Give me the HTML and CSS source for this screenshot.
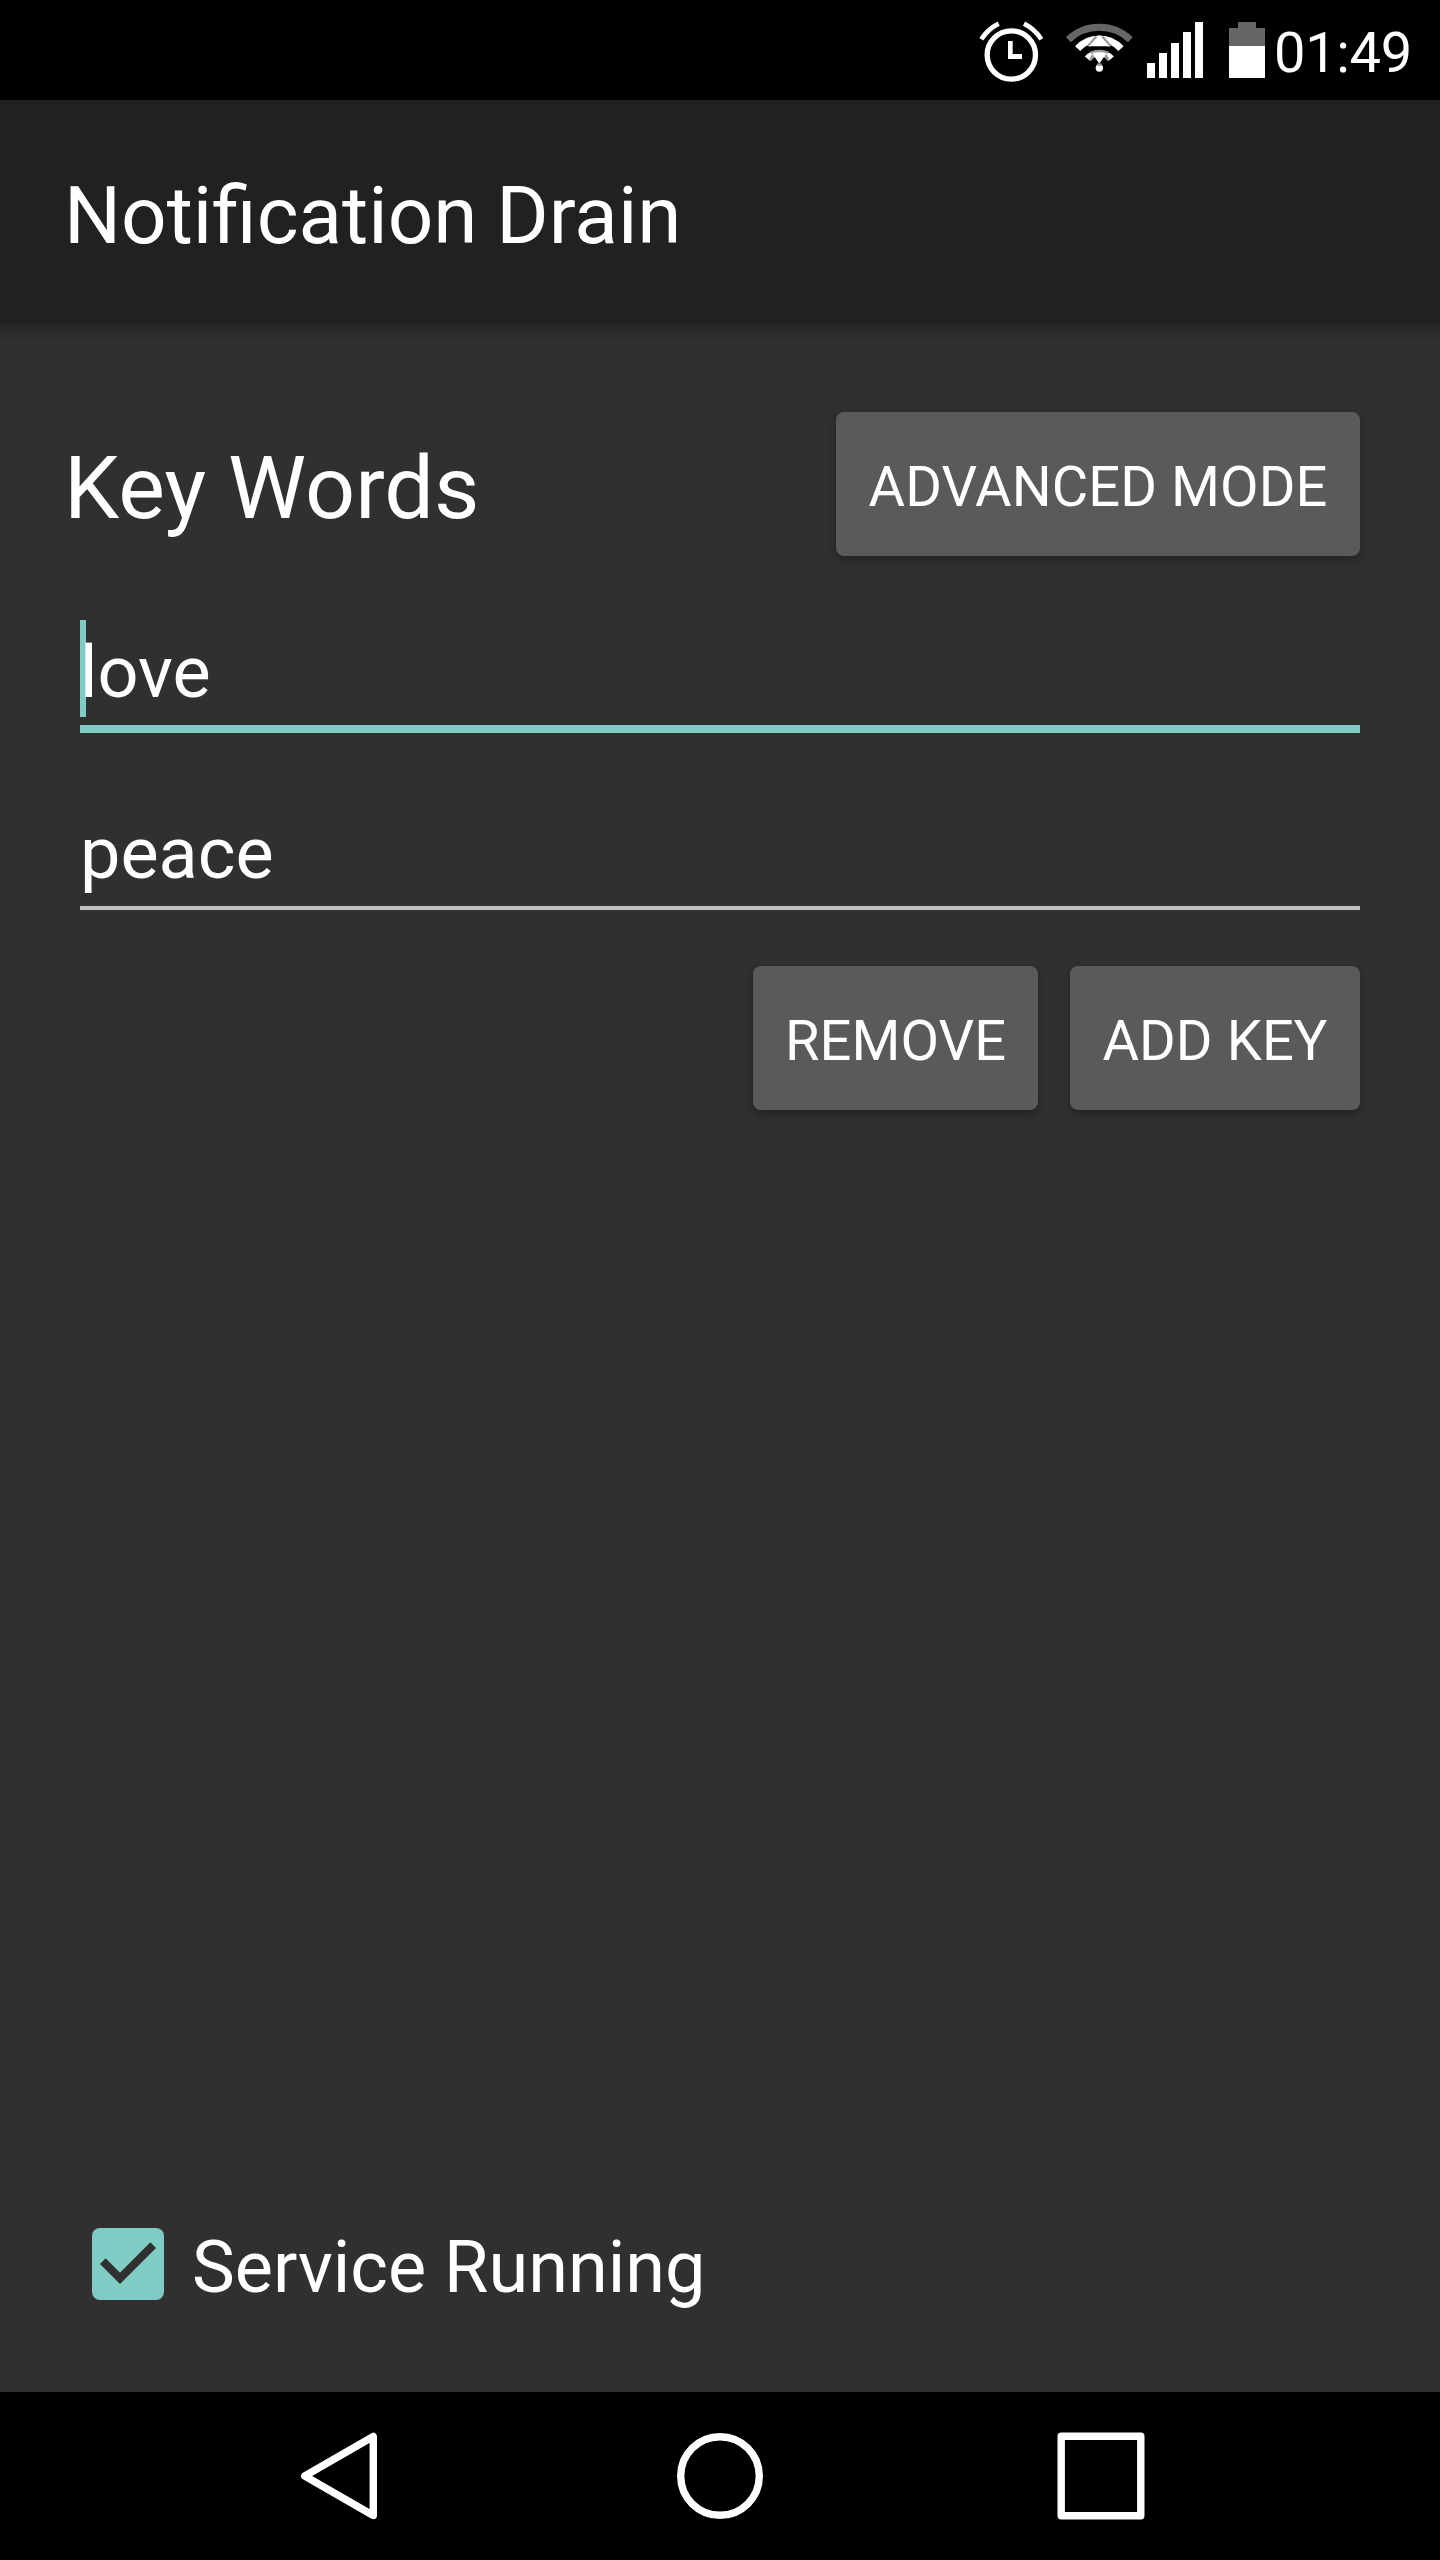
FILE: index.html
```html
<!DOCTYPE html>
<html lang="en">
<head>
<meta charset="utf-8">
<title>Notification Drain</title>
<link rel="stylesheet" href="styles.css">
</head>
<body>
<div class="status-bar">
  <svg class="alarm-icon" viewBox="0 0 192 186" fill="none" stroke="#fff">
    <circle cx="97" cy="105" r="72.500" stroke-width="16"/>
    <path d="M7 58Q26 28 59 11" stroke-width="14"/>
    <path d="M187 58Q168 28 135 11" stroke-width="14"/>
    <path d="M87 63h14v39h28v15H87z" fill="#fff" stroke="none"/>
  </svg>
  <svg class="wifi-icon" viewBox="0 0 200 150" fill="none">
    <path d="M7 53A135 135 0 0 1 193 53" stroke="#666" stroke-width="21"/>
    <path d="M35 80A88 88 0 0 1 165 80" stroke="#fff" stroke-width="21"/>
    <path d="M64 110A48 48 0 0 1 136 110" stroke="#fff" stroke-width="20"/>
    <path d="M92 44L67 73M108 44L133 73" stroke="#999" stroke-width="9"/>
    <path d="M84 95L73 115M116 95L127 115" stroke="#999" stroke-width="8"/>
    <path d="M74 92Q100 83 126 92" stroke="#999" stroke-width="8"/>
    <path d="M100 39L131 73H69z" fill="#fff"/>
    <path d="M78 93Q100 89 122 93L100 125z" fill="#fff"/>
    <circle cx="100" cy="138" r="11" fill="#fff"/>
    <path d="M93 128h14" stroke="#999" stroke-width="7"/>
  </svg>
  <svg class="signal-icon" viewBox="0 0 56 56" fill="#fff">
    <path d="M0 41h8v15H0zM12 31h8v25h-8zM24 21h8v35h-8zM36 10h8v46h-8zM48 0h8v56h-8z"/>
  </svg>
  <svg class="battery-icon" viewBox="0 0 36 56">
    <path d="M9 0h18v6h9v18H0V6h9z" fill="#666"/>
    <path d="M0 24h36v32H0z" fill="#fff"/>
  </svg>
  <span class="clock">01:49</span>
</div>
<header class="app-bar"><h1 class="app-title">Notification Drain</h1></header>
<main class="content">
  <div class="heading-row">
    <h2 class="heading">Key Words</h2>
    <button class="button button-advanced">ADVANCED MODE</button>
  </div>
  <div class="field field-focused"><span class="caret"></span><span class="field-text">love</span></div>
  <div class="field field-second"><span class="field-text">peace</span></div>
  <div class="actions">
    <button class="button button-remove">REMOVE</button>
    <button class="button button-add">ADD KEY</button>
  </div>
  <div class="service">
    <svg class="checkbox" viewBox="3 3 18 18">
      <rect x="3" y="3" width="18" height="18" rx="2" fill="#80cbc4"/>
      <path d="M10 17l-5-5 1.410-1.410L10 14.170l7.590-7.590L19 8z" fill="#303030"/>
    </svg>
    <span class="service-label">Service Running</span>
  </div>
</main>
<nav class="nav-bar">
  <svg class="nav-icon" viewBox="0 0 96 96"><path d="M13.700 48L82.300 8.500v79z"/></svg>
  <svg class="nav-icon" viewBox="0 0 96 96"><circle cx="48" cy="48" r="39.300"/></svg>
  <svg class="nav-icon" viewBox="0 0 96 96"><rect x="8.200" y="8.200" width="79.600" height="79.600"/></svg>
</nav>
</body>
</html>
```
FILE: styles.css
```css
* { box-sizing: border-box; }

body {
  margin: 0;
  width: 1440px;
  height: 2560px;
  display: flex;
  flex-direction: column;
  overflow: hidden;
  background: #303030;
  color: #fff;
  font-family: Roboto, sans-serif;
}

h1, h2 { margin: 0; font-weight: 400; }
svg { display: block; flex: none; }

.status-bar {
  height: 100px;
  flex: none;
  display: flex;
  align-items: flex-start;
  padding: 20px 0 0 979px;
  background: #000;
}
.alarm-icon { width: 64px; height: 62px; }
.wifi-icon { width: 66.670px; height: 50px; margin: 2px 0 0 23.330px; }
.signal-icon { width: 56px; height: 56px; margin: 2px 0 0 14px; }
.battery-icon { width: 36px; height: 56px; margin: 2px 0 0 26px; }
.clock { margin: 0 0 0 9px; font-size: 56px; line-height: 66px; letter-spacing: -.3px; }

.app-bar {
  height: 224px;
  flex: none;
  display: flex;
  align-items: center;
  padding: 7px 64px 0;
  background: #212121;
}
.app-title { font-size: 80px; line-height: 94px; word-spacing: -1px; }

.content {
  flex: 1;
  display: flex;
  flex-direction: column;
  padding: 88px 80px 0 64px;
  background: linear-gradient(#262626, #2b2b2b 9px, #2f2f2f 17px, #303030 24px);
}
.heading-row { display: flex; justify-content: space-between; height: 144px; }
.heading { font-size: 88px; line-height: 104px; margin-top: 24px; letter-spacing: .1px; }

.button {
  height: 144px;
  padding: 6px 0 0;
  border: 0;
  border-radius: 8px;
  background: #5a595b;
  color: #fff;
  font: 400 56px/66px Roboto, sans-serif;
  letter-spacing: .1px;
  white-space: nowrap;
  box-shadow: 0 4px 8px rgba(0, 0, 0, .3);
}
.button-advanced { width: 524px; }
.button-remove { width: 285px; }
.button-add { width: 290px; }

.field {
  position: relative;
  height: 113px;
  margin: 64px 0 0 16px;
  font-size: 72px;
  line-height: 84px;
  padding-top: 11px;
}
.field-focused { border-bottom: 8px solid #80cbc4; }
.field-text { position: relative; display: block; }
.caret {
  position: absolute;
  left: 0;
  top: 0;
  width: 6px;
  height: 97px;
  background: #80cbc4;
}
.field-second { padding-top: 15px; border-bottom: 4px solid #c1c1c1; }

.actions { display: flex; justify-content: flex-end; gap: 32px; margin-top: 56px; }

.service { display: flex; height: 84px; margin: auto 0 82px 28px; }
.checkbox { width: 72px; height: 72px; margin-top: 2px; }
.service-label { font-size: 72px; line-height: 84px; margin: 0 0 0 28px; }

.nav-bar {
  height: 168px;
  flex: none;
  display: flex;
  justify-content: center;
  gap: 285px;
  padding-top: 36px;
  background: #000;
}
.nav-icon { width: 96px; height: 96px; fill: none; stroke: #fff; stroke-width: 7.400; stroke-linejoin: round; }
```
